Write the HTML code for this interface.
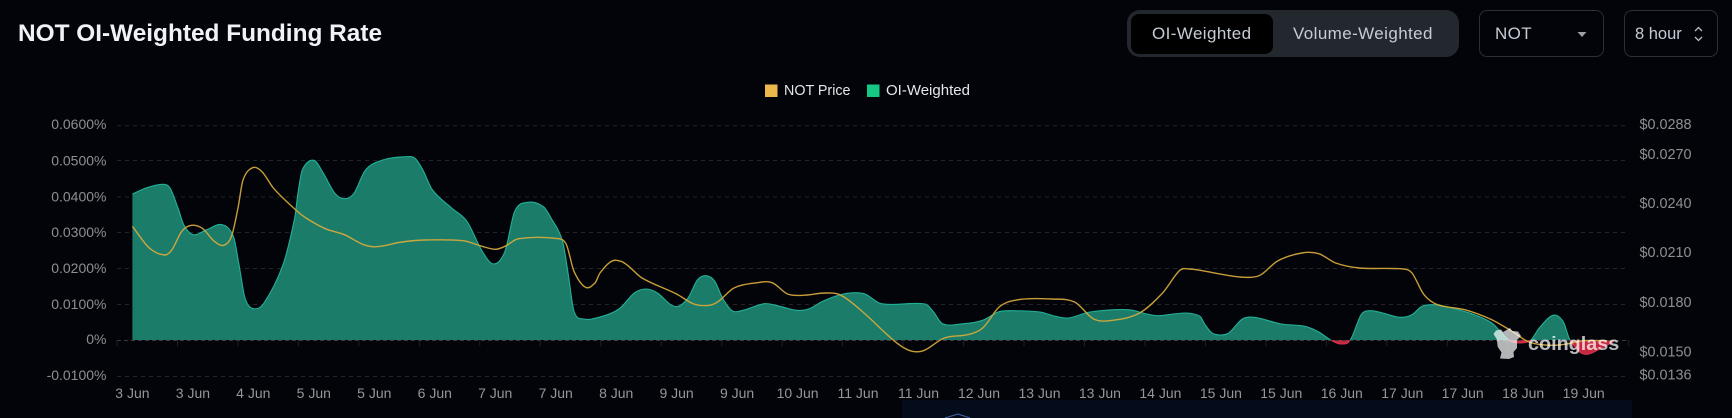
<!DOCTYPE html>
<html>
<head>
<meta charset="utf-8">
<title>NOT OI-Weighted Funding Rate</title>
<style>
html,body{margin:0;padding:0;width:1732px;height:418px;overflow:hidden;background:#02040a;}
body{position:relative;font-family:"Liberation Sans",sans-serif;}
.a{position:absolute;box-sizing:border-box;}
.title{left:18px;top:19px;font-size:24.4px;font-weight:700;color:#f0f2f7;line-height:30px;white-space:nowrap;}
.toggle{left:1127px;top:10px;width:332px;height:47px;background:#23272e;border-radius:13px;}
.on{left:1131px;top:14px;width:142px;height:40px;background:#000;border-radius:8px;}
.btxt{font-size:17px;letter-spacing:.4px;color:#c6ccd6;line-height:24px;white-space:nowrap;top:22px;}
.sel{top:10px;height:47px;border:1px solid #2b2f36;border-radius:8px;}
.bar{left:902px;top:400px;width:730px;height:18px;background:#040b1a;}
svg{position:absolute;left:0;top:0;}
</style>
</head>
<body>
<div class="a title">NOT OI-Weighted Funding Rate</div>
<div class="a toggle"></div>
<div class="a on"></div>
<div class="a btxt" style="left:1152px;">OI-Weighted</div>
<div class="a btxt" style="left:1293px;">Volume-Weighted</div>
<div class="a sel" style="left:1479px;width:125px;"></div>
<div class="a btxt" style="left:1495px;">NOT</div>
<div class="a sel" style="left:1624px;width:94px;"></div>
<div class="a btxt" style="left:1635px;letter-spacing:0;font-size:16.5px;">8 hour</div>
<div class="a bar"></div>

<svg width="1732" height="418" viewBox="0 0 1732 418" xmlns="http://www.w3.org/2000/svg">
  <defs>
    <clipPath id="up"><rect x="100" y="100" width="1540" height="240"/></clipPath>
    <clipPath id="down"><rect x="100" y="340" width="1540" height="40"/></clipPath>
  </defs>
  <!-- controls icons -->
  <path d="M1577.5 32h9l-4.5 5z" fill="#9aa0a8"/>
  <path d="M1695 31l3.5-3.5 3.5 3.5M1695 37l3.500 3.500 3.500-3.500" fill="none" stroke="#b8bec6" stroke-width="1.3"/>
  <path d="M945 418l13-4 12 4" fill="none" stroke="#3c5a96" stroke-width="1.2"/>

  <!-- legend -->
  <rect x="765" y="84.500" width="12.500" height="12.500" fill="#eab84d"/>
  <rect x="867" y="84.500" width="12.500" height="12.500" fill="#16c784"/>
  <text x="784" y="95" font-size="14.300" fill="#e4e6ea" font-family="Liberation Sans, sans-serif">NOT Price</text>
  <text x="886" y="95" font-size="15" fill="#e4e6ea" font-family="Liberation Sans, sans-serif">OI-Weighted</text>

  <!-- grid -->
  <g stroke="#222428" stroke-width="1" stroke-dasharray="4 4" fill="none">
    <path d="M117 125.700H1629M117 160.500H1629M117 197H1629M117 232.500H1629M117 268.500H1629M117 304.500H1629M117 376.500H1629"/>
  </g>

  <!-- area -->
  <path id="areaG" clip-path="url(#up)" fill="#1c7c6a" stroke="none"/>
  <path id="areaR" clip-path="url(#down)" fill="#c4283f" stroke="none"/>
  <path id="lineG" clip-path="url(#up)" fill="none" stroke="#22b097" stroke-width="1.100"/>
  <path id="lineR" clip-path="url(#down)" fill="none" stroke="#d8324a" stroke-width="1.100"/>

  <!-- zero axis -->
  <path d="M117 340.500H1629" stroke="#3c3a3c" stroke-width="1" stroke-dasharray="4 3" fill="none"/>
  <path d="M117 340v6M177.500 340v6M238 340v6M298.400 340v6M358.900 340v6M419.400 340v6M479.800 340v6M540.300 340v6M600.800 340v6M661.200 340v6M721.700 340v6M782.200 340v6M842.600 340v6M903.100 340v6M963.600 340v6M1024 340v6M1084.500 340v6M1145 340v6M1205.400 340v6M1265.900 340v6M1326.400 340v6M1386.800 340v6M1447.300 340v6M1507.800 340v6M1568.200 340v6M1628.700 340v6" stroke="#1f2124" stroke-width="1"/>

  <!-- price line -->
  <path id="price" fill="none" stroke="#d8aa3c" stroke-width="1.400" stroke-opacity=".92"/>

  <!-- watermark -->
  <path d="M1493.500 334L1496 330.500L1501 329.500L1503 332L1510 328L1512 331L1518 331.500L1521 336L1517 340L1517 348L1513.500 352L1514 357L1509 359L1500 358.500L1501.500 352.500L1497.700 346.700L1496.700 339Z" fill="#fff" fill-opacity=".7"/>
  <text x="1528" y="350" font-size="19.800" font-weight="700" fill="#fff" fill-opacity=".72" font-family="Liberation Sans, sans-serif">coinglass</text>

  <!-- left axis -->
  <g font-size="14" fill="#8f8f8f" text-anchor="end" font-family="Liberation Sans, sans-serif">
    <text x="106.500" y="129">0.0600%</text>
    <text x="106.500" y="165.500">0.0500%</text>
    <text x="106.500" y="201.500">0.0400%</text>
    <text x="106.500" y="237">0.0300%</text>
    <text x="106.500" y="273">0.0200%</text>
    <text x="106.500" y="309">0.0100%</text>
    <text x="106.500" y="344">0%</text>
    <text x="106.500" y="380">-0.0100%</text>
  </g>
  <!-- right axis -->
  <g font-size="14.400" fill="#8f8f8f" font-family="Liberation Sans, sans-serif">
    <text x="1639.500" y="129">$0.0288</text>
    <text x="1639.500" y="159">$0.0270</text>
    <text x="1639.500" y="208">$0.0240</text>
    <text x="1639.500" y="257">$0.0210</text>
    <text x="1639.500" y="307">$0.0180</text>
    <text x="1639.500" y="356.500">$0.0150</text>
    <text x="1639.500" y="379.500">$0.0136</text>
  </g>
  <!-- x axis -->
  <g font-size="14" fill="#969696" text-anchor="middle" font-family="Liberation Sans, sans-serif">
    <text x="132.400" y="398">3 Jun</text><text x="192.900" y="398">3 Jun</text><text x="253.300" y="398">4 Jun</text><text x="313.800" y="398">5 Jun</text><text x="374.300" y="398">5 Jun</text>
    <text x="434.800" y="398">6 Jun</text><text x="495.200" y="398">7 Jun</text><text x="555.700" y="398">7 Jun</text><text x="616.200" y="398">8 Jun</text><text x="676.600" y="398">9 Jun</text>
    <text x="737.100" y="398">9 Jun</text><text x="797.600" y="398">10 Jun</text><text x="858" y="398">11 Jun</text><text x="918.500" y="398">11 Jun</text><text x="979" y="398">12 Jun</text>
    <text x="1039.500" y="398">13 Jun</text><text x="1099.900" y="398">13 Jun</text><text x="1160.400" y="398">14 Jun</text><text x="1220.900" y="398">15 Jun</text><text x="1281.300" y="398">15 Jun</text>
    <text x="1341.800" y="398">16 Jun</text><text x="1402.300" y="398">17 Jun</text><text x="1462.700" y="398">17 Jun</text><text x="1523.200" y="398">18 Jun</text><text x="1583.700" y="398">19 Jun</text>
  </g>
</svg>

<script>
(function(){
var areaPts=[132.4,194,146,188,162.6,184.3,170,188,178,208,183.7,224.7,193,234.7,206.7,229.7,222,224.7,233.4,236.3,239,264.7,245,298,253.3,308.7,264,303,283,264.7,294.7,218,297.7,195,302.3,170,313.8,160.3,323.4,173.3,334.9,193.3,344.4,198.7,354,193.3,365.5,170,382.7,160,405.7,156.7,415,158.3,422.9,170,432.5,190,451.6,208,466.9,221.3,482.2,251.3,493.7,264,505,251.3,514.7,211.3,528,202.3,543.4,206.7,551,218,562.6,241.3,568.3,274.7,574,311.3,583.6,319,600,317,619,309,634.4,293,646,289,657.4,293,670.8,304.7,678.5,306.3,688,298,697.6,279.7,706.4,275.7,714.8,281.3,722.5,298,732,310.7,741.6,310.7,764.6,303.7,779.9,306.3,797,310.3,808.6,309,823.9,300.7,845,293.7,864,293.7,881.3,303.7,925.3,304,933,311.3,942.5,323.7,963.6,323.7,982.7,320.3,998,312,1009.5,310.7,1040,312,1055.4,316.3,1068.8,318,1089.9,312,1128,309.7,1147,314,1158.7,315.7,1185.5,313,1200,316.3,1205,324.7,1212,333,1220.4,335,1228.8,333,1242.4,319,1254.3,317.3,1281.4,324,1305,326.3,1318.8,332,1330.6,340,1340.8,344,1350.3,340,1361.2,314.7,1369.7,310.7,1380,312.3,1400,317.3,1412,314.7,1422,306.3,1434,304.7,1447.7,307,1471.5,313.7,1491.8,323,1508.8,340,1520.7,343,1530.9,340,1539.3,328,1553,315.3,1563,321.3,1570,340,1583.4,354,1600,349,1614,341];
var pricePts=[132.4,226.3,149.3,248,164.6,255,172,249.7,181.8,231.3,191.4,225.3,202.8,228.7,214.3,241.3,223.9,245.3,231.5,236.3,238,208,243,180,252.6,167.7,262,171.7,273.6,188.3,294.7,209,306,218,325.3,228.7,344.4,234.7,363.6,244.7,377,246.7,401.8,242,424.8,240,463,240.7,482,246.3,495.6,249.3,505,246.3,518.6,238.7,558.7,238.7,566.4,244.7,574,271.3,585.5,287.3,595,283,600,273,611.5,261.3,621,261.3,628.7,266.3,642,278,676.5,294,693.8,304,709,305.3,718.6,301.3,734,288,757,282.7,772.2,282.7,787.5,294,802.8,295.3,825.8,293,841,295.3,864,313,894.7,341.3,910,350.7,923.4,350.7,944.4,338,967.4,334.7,982.7,328,1000,306.3,1021,299.3,1051.6,299,1074.6,302,1093.7,319,1112.8,320.3,1139.6,313,1162.6,293,1179.8,270.3,1189.4,269,1200,270.3,1234,276.3,1251,277.3,1261,274.7,1278,260.7,1301.8,253,1318.8,253.7,1335.7,263,1359.5,268,1403.6,269,1412,273,1424,294.7,1437.5,304.7,1464.7,309.7,1491.8,319.7,1512,331.3,1529,342,1549.5,345.3,1566.5,344,1583.4,340.7,1607,340.7];
function smooth(a){
  var p=[],i;
  for(i=0;i<a.length;i+=2)p.push([a[i],a[i+1]]);
  var d="M"+p[0][0]+" "+p[0][1];
  for(i=0;i<p.length-1;i++){
    var p0=p[Math.max(i-1,0)],p1=p[i],p2=p[i+1],p3=p[Math.min(i+2,p.length-1)];
    var h=p2[0]-p1[0];
    var t1=(p2[1]-p0[1])/(p2[0]-p0[0]||1);
    var t2=(p3[1]-p1[1])/(p3[0]-p1[0]||1);
    d+="C"+(p1[0]+h/3).toFixed(1)+" "+(p1[1]+t1*h/3).toFixed(1)+" "+(p2[0]-h/3).toFixed(1)+" "+(p2[1]-t2*h/3).toFixed(1)+" "+p2[0]+" "+p2[1];
  }
  return d;
}
var aD=smooth(areaPts);
var shape=aD+"L1614 340L132.4 340Z";
document.getElementById("areaG").setAttribute("d",shape);
document.getElementById("areaR").setAttribute("d",shape);
document.getElementById("lineG").setAttribute("d",aD);
document.getElementById("lineR").setAttribute("d",aD);
document.getElementById("price").setAttribute("d",smooth(pricePts));
})();
</script>
</body>
</html>
